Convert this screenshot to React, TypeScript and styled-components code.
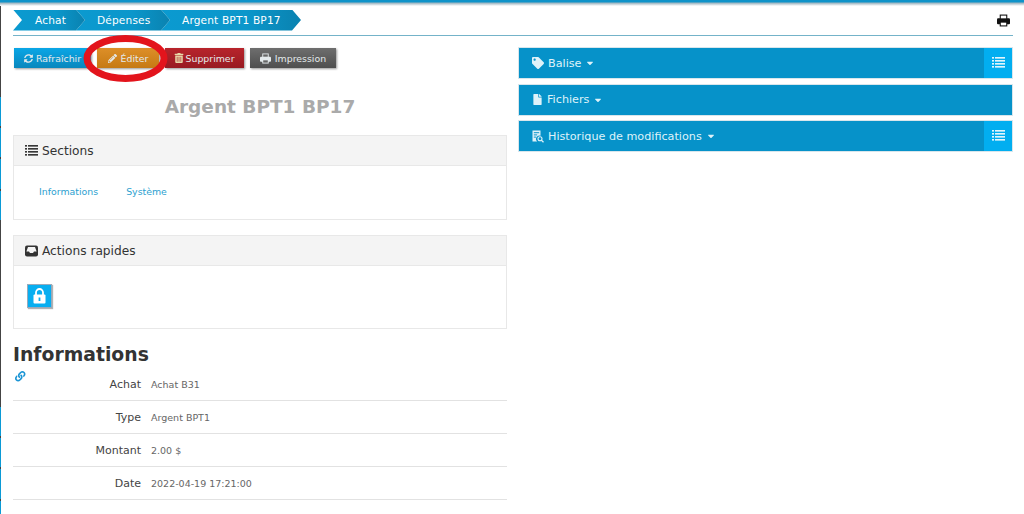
import React from "react";
import styled, { createGlobalStyle } from "styled-components";
import { FaSyncAlt, FaPencilAlt, FaTrashAlt, FaTag, FaFile, FaLink, FaCaretDown } from "react-icons/fa";

const Global = createGlobalStyle`
  html, body { margin: 0; padding: 0; background: #fff; width: 1024px; height: 514px; overflow: hidden; }
  body { font-family: "DejaVu Sans", sans-serif; }
`;
const Page = styled.div`
  position: relative; width: 1024px; height: 514px; overflow: hidden; box-sizing: border-box;
  padding: 9px 11px 0 13px;
  background:
    linear-gradient(#0e93c9 0, #0e93c9 2px, #9db4bf 3px, #fff 6px) 0 0 / 100% 6px no-repeat,
    linear-gradient(#444 0, #444 97px, #0b9ad6 97px, #0b9ad6 126px, #444 126px, #444 128px,
      #0b9ad6 128px, #0b9ad6 157px, #444 157px, #444 159px, #0b9ad6 159px, #0b9ad6 189px,
      #444 189px, #444 191px, #0b9ad6 191px, #0b9ad6 220px, #444 220px, #444 407px,
      #0b9ad6 407px, #0b9ad6 436px, #444 436px, #444 438px, #0b9ad6 438px, #0b9ad6 467px,
      #444 467px, #444 469px, #0b9ad6 469px, #0b9ad6 499px, #444 499px, #444 501px, #0b9ad6 501px) 0 0 / 1px 100% no-repeat,
    #fff;
`;
const TopBar = styled.div`
  display: flex; align-items: center; justify-content: space-between; height: 26px;
  border-bottom: 1px solid #74b3c9;
`;
const Crumbs = styled.div`display: flex; height: 21px; margin-bottom: 4px; isolation: isolate;`;
const Crumb = styled.div<{ $w: number; $z: number; $pad: number }>`
  position: relative; z-index: ${p => p.$z};
  width: ${p => p.$w}px; height: 21px; display: flex; align-items: center;
  background: linear-gradient(90deg, #0b9ad0 0%, #0b97cb 60%, #0a82b0 100%);
  color: #fff; font-size: 10.6px; letter-spacing: .15px; padding-left: ${p => p.$pad}px; box-sizing: border-box; margin-right: -9px;
  clip-path: polygon(0 0, calc(100% - 9px) 0, 100% 50%, calc(100% - 9px) 100%, 0 100%, 9px 50%);
`;
const PrintBtn = styled.div`color: #111; display: flex; margin: 0 3px 4px 0;`;
const Columns = styled.div`display: flex; gap: 11px; margin-top: 12px;`;
const Left = styled.div`width: 494px; flex: none;`;
const Right = styled.div`flex: 1; display: flex; flex-direction: column; gap: 4.5px; margin-top: -1px;`;
const Buttons = styled.div`display: flex; gap: 6px; margin-left: 1px;`;
const Btn = styled.div<{ $bg: string; $w: number; $gap?: number }>`
  width: ${p => p.$w}px; height: 20px; background: ${p => p.$bg}; color: #e4eaec;
  display: flex; align-items: center; justify-content: center; gap: ${p => p.$gap ?? 3}px; font-size: 9.4px; box-sizing: border-box;
  box-shadow: 1px 1px 2px rgba(0,0,0,.4);
`;
const Title = styled.h1`
  margin: 27px 0 0; text-align: center; height: 23px; line-height: 23px; font-size: 18.5px; font-weight: 700; color: #aaa;
`;
const Panel = styled.div<{ $h: number; $mt: number }>`
  height: ${p => p.$h}px; margin-top: ${p => p.$mt}px; border: 1px solid #e8e8e8; box-sizing: border-box;
`;
const PanelHead = styled.div`
  height: 30px; background: #f4f4f4; border-bottom: 1px solid #e8e8e8; display: flex; align-items: center; gap: 4px;
  padding-left: 11px; font-size: 12.2px; color: #333; box-sizing: border-box;
`;
const Links = styled.div`display: flex; gap: 28px; padding: 20px 0 0 25px; font-size: 9.4px; color: #2d9fd0;`;
const LockBox = styled.div`
  width: 25px; height: 24px; margin: 18px 0 0 13px; background: #08aef0; display: flex; align-items: center; justify-content: center;
  border: 1px solid #9ab; box-sizing: border-box; box-shadow: 1px 1px 1px rgba(0,0,0,.3);
`;
const H2 = styled.h2`margin: 15px 0 0; font-size: 18.8px; line-height: 22px; font-weight: 700; color: #333;`;
const Rows = styled.div`position: relative; margin-top: 2px;`;
const LinkIcon = styled.div`position: absolute; left: 2px; top: 3px; color: #1b95d5; font-size: 10.5px; line-height: 10px;`;
const Row = styled.div`
  display: flex; align-items: center; height: 33px; border-bottom: 1px solid #e2e2e2; box-sizing: border-box; gap: 10px;
`;
const Key = styled.div`width: 128px; text-align: right; font-size: 11px; color: #444;`;
const Val = styled.div`font-size: 9.5px; color: #666;`;
const Bar = styled.div`
  height: 32px; background: #0692c9; border: 1px solid #d8e6ec; box-sizing: border-box; display: flex; align-items: center;
  justify-content: space-between; color: #dff2f9; font-size: 11.2px;
`;
const BarLabel = styled.div`display: flex; align-items: center; gap: 4px; padding-left: 13px;`;
const Side = styled.div`width: 28px; height: 30px; background: #02aef0; color: #e8f6fb; display: flex; align-items: center; justify-content: center;`;
const Ring = styled.svg`position: absolute; left: 83px; top: 35px;`;

const ListIcon = ({ w = 13 }: { w?: number }) => (
  <svg width={w} height={w * 0.85} viewBox="0 0 13 11" fill="currentColor">
    {[0, 3, 6, 9].map(y => (
      <g key={y}>
        <rect x="0" y={y} width="2" height="1.6" />
        <rect x="3" y={y} width="10" height="1.6" />
      </g>
    ))}
  </svg>
);
const PrintIcon = ({ s = 12, paper = "#fff" }: { s?: number; paper?: string }) => (
  <svg width={s} height={s} viewBox="0 0 12 12">
    <rect x="2.5" y="0.5" width="7" height="4" fill="currentColor" />
    <rect x="0" y="4" width="12" height="5.5" rx="1" fill="currentColor" />
    <rect x="2.5" y="7" width="7" height="4.5" fill="currentColor" />
    <rect x="3.5" y="8" width="5" height="2.5" fill={paper} />
    <rect x="3.5" y="1.5" width="5" height="2.5" fill={paper} />
  </svg>
);
const InboxIcon = () => (
  <svg width="13" height="12" viewBox="0 0 13 12">
    <rect x="0" y="0.5" width="13" height="11" rx="2" fill="#333" />
    <path d="M3 2h7l1.6 4.5H9L8 8H5L4 6.500H1.400z" fill="#f4f4f4" />
  </svg>
);
const LockIcon = () => (
  <svg width="13" height="16" viewBox="0 0 13 16">
    <path d="M3 7V4.500a3.500 3.500 0 0 1 7 0V7" fill="none" stroke="#fff" strokeWidth="1.800" />
    <rect x="0.500" y="6.500" width="12" height="9" rx="1" fill="#fff" />
    <rect x="5.600" y="9.500" width="1.800" height="3.500" fill="#08aef0" />
  </svg>
);
const HistoryIcon = () => (
  <svg width="12" height="13" viewBox="0 0 12 13" fill="currentColor">
    <path d="M0.500 0.500h8v5.200a3.400 3.400 0 0 0-3.300 5.800H0.500z" />
    <rect x="1.800" y="2.200" width="5.400" height="1" fill="#0692c9" />
    <rect x="1.800" y="4.400" width="3.400" height="1" fill="#0692c9" />
    <rect x="1.800" y="6.600" width="2.400" height="1" fill="#0692c9" />
    <circle cx="8" cy="8.700" r="2" fill="none" stroke="currentColor" strokeWidth="1.100" />
    <path d="M9.400 10.100l2.100 2.100" stroke="currentColor" strokeWidth="1.300" />
  </svg>
);

export default function App() {
  return (
    <Page>
      <Global />
      <TopBar>
        <Crumbs>
          <Crumb $w={72} $z={3} $pad={22}>Achat</Crumb>
          <Crumb $w={94} $z={2} $pad={21}>Dépenses</Crumb>
          <Crumb $w={140} $z={1} $pad={21}>Argent BPT1 BP17</Crumb>
        </Crumbs>
        <PrintBtn><PrintIcon s={13} paper="#fff" /></PrintBtn>
      </TopBar>
      <Columns>
        <Left>
          <Buttons>
            <Btn $bg="linear-gradient(#0aa6e6,#0987bd)" $w={77}><FaSyncAlt size={9} />Rafraîchir</Btn>
            <Btn $bg="linear-gradient(#dd8f28,#c67a14)" $w={62} $gap={4}><FaPencilAlt size={9} />Éditer</Btn>
            <Btn $bg="linear-gradient(#b8242c,#981b22)" $w={79} $gap={1}><FaTrashAlt size={10} color="#e8d8a8" />Supprimer</Btn>
            <Btn $bg="linear-gradient(#6e6e6e,#4f4f4f)" $w={86} $gap={4}><PrintIcon s={11} paper="#666" />Impression</Btn>
          </Buttons>
          <Title>Argent BPT1 BP17</Title>
          <Panel $h={85} $mt={17}>
            <PanelHead><ListIcon />Sections</PanelHead>
            <Links><span>Informations</span><span>Système</span></Links>
          </Panel>
          <Panel $h={94} $mt={15}>
            <PanelHead><InboxIcon />Actions rapides</PanelHead>
            <LockBox><LockIcon /></LockBox>
          </Panel>
          <H2>Informations</H2>
          <Rows>
            <LinkIcon><FaLink /></LinkIcon>
            <Row><Key>Achat</Key><Val>Achat B31</Val></Row>
            <Row><Key>Type</Key><Val>Argent BPT1</Val></Row>
            <Row><Key>Montant</Key><Val>2.00 $</Val></Row>
            <Row><Key>Date</Key><Val>2022-04-19 17:21:00</Val></Row>
          </Rows>
        </Left>
        <Right>
          <Bar><BarLabel><FaTag size={12} />Balise <FaCaretDown size={10} /></BarLabel><Side><ListIcon /></Side></Bar>
          <Bar><BarLabel><FaFile size={11} />Fichiers <FaCaretDown size={10} /></BarLabel></Bar>
          <Bar><BarLabel><HistoryIcon />Historique de modifications <FaCaretDown size={10} /></BarLabel><Side><ListIcon /></Side></Bar>
        </Right>
      </Columns>
      <Ring width="86" height="48" viewBox="0 0 86 48">
        <ellipse cx="42.5" cy="23.5" rx="38.5" ry="20" fill="none" stroke="#e3141c" strokeWidth="7" />
      </Ring>
    </Page>
  );
}
